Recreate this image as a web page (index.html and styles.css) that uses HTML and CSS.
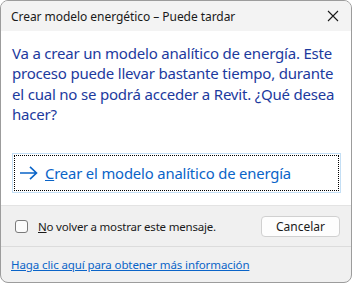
FILE: index.html
```html
<!DOCTYPE html>
<html lang="es">
  <head>
    <meta charset="UTF-8" />
    <meta name="viewport" content="width=device-width, initial-scale=1.0" />
    <title>Crear modelo energético</title>
    <link rel="stylesheet" href="styles.css">
  </head>
  <body>
    <div class="dialog">
      <div class="titlebar">
        <span class="title">Crear modelo energético – Puede tardar</span>
        <svg class="close" width="12" height="12" viewBox="0 0 12 12">
          <path d="M1 1 L11 11 M11 1 L1 11" stroke="#1a1a1a" stroke-width="1.1" fill="none" />
        </svg>
      </div>
      <div class="content">
        <p class="instruction">
          Va a crear un modelo analítico de energía. Este proceso puede llevar bastante tiempo, durante el cual no se podrá acceder a Revit. ¿Qué desea hacer?
        </p>
        <div class="command">
          <div class="focus">
            <svg class="arrow" width="18" height="14" viewBox="0 0 18 14">
              <path d="M0 7 H16.5 M10 0.8 L16.5 7 L10 13.2" stroke="#0a64c8" stroke-width="1.6" fill="none" />
            </svg>
            <span class="command-text"><u>C</u>rear el modelo analítico de energía</span>
          </div>
        </div>
      </div>
      <div class="footer">
        <div class="options">
          <label class="check">
            <span class="box"></span>
            <span><u>N</u>o volver a mostrar este mensaje.</span>
          </label>
          <button class="cancel">Cancelar</button>
        </div>
        <div class="more">
          <a href="#">Haga clic aquí para obtener más información</a>
        </div>
      </div>
    </div>
  </body>
</html>
```

FILE: styles.css
```css
* {
  box-sizing: border-box;
  margin: 0;
  padding: 0;
}
body {
  background: #fff;
  font-family: "Noto Sans", "Open Sans", sans-serif;
}
.dialog {
  width: 352px;
  height: 283px;
  border: 1px solid #9c9c9c;
  border-radius: 8px;
  overflow: hidden;
  display: flex;
  flex-direction: column;
  background: #f0f0f0;
}
.titlebar {
  height: 30px;
  background: #f3f3f3;
  display: flex;
  align-items: center;
  justify-content: space-between;
  padding: 0 12px 0 10px;
}
.title {
  font-size: 12px;
  letter-spacing: -0.05px;
  color: #1a1a1a;
}
.content {
  background: #fff;
  padding: 12px 10px 10px 11px;
  height: 175px;
  border-bottom: 1px solid #e3e3e3;
}
.instruction {
  font-size: 15px;
  letter-spacing: -0.2px;
  line-height: 20.3px;
  color: #1c3a9e;
}
.command {
  margin-top: 29px;
  border: 1px solid #c4dff5;
  padding: 1px;
  height: 40px;
}
.focus {
  height: 100%;
  border: 1px dotted #000;
  display: flex;
  align-items: center;
  padding-left: 5px;
  gap: 7px;
}
.command-text {
  font-size: 14.8px;
  letter-spacing: -0.15px;
  color: #0a64c8;
}
.footer {
  flex: 1;
  display: flex;
  flex-direction: column;
}
.options {
  height: 41px;
  display: flex;
  align-items: center;
  justify-content: space-between;
  padding: 0 11px 0 14px;
  border-bottom: 1px solid #dcdcdc;
}
.check {
  display: flex;
  align-items: center;
  gap: 10px;
  font-size: 11.5px;
  letter-spacing: -0.2px;
  color: #1a1a1a;
}
.box {
  width: 13px;
  height: 13px;
  border: 1px solid #7a7a7a;
  border-radius: 3px;
  background: #fbfbfb;
}
.cancel {
  width: 79px;
  height: 21px;
  font-family: inherit;
  font-size: 12px;
  color: #1a1a1a;
  background: #fdfdfd;
  border: 1px solid #d0d0d0;
  border-radius: 4px;
}
.more {
  flex: 1;
  display: flex;
  align-items: center;
  padding-left: 10px;
}
.more a {
  font-size: 11.5px;
  letter-spacing: -0.1px;
  color: #0a64c8;
}
```
